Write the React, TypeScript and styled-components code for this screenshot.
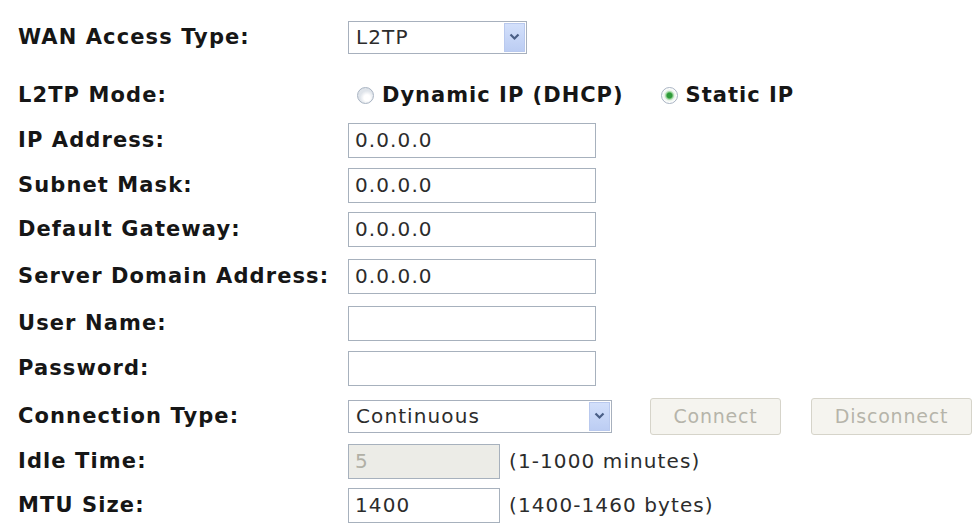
import React from 'react'
import styled, { createGlobalStyle } from 'styled-components'

const GlobalStyle = createGlobalStyle`
  body {
    margin: 0;
    background: #ffffff;
  }
`

const Chevron = () => (
  <svg width="11" height="8" viewBox="0 0 11 8">
    <path d="M1.5 1.5 L5.5 5.5 L9.5 1.5" fill="none" stroke="#4a5f86" strokeWidth="2.2" />
  </svg>
)

type SelectProps = { value: string; width: number }

const SelectBox: React.FunctionComponent<SelectProps> = ({ value, width }) => (
  <SelectFrame $w={width}>
    <SelectText>{value}</SelectText>
    <ArrowButton>
      <Chevron />
    </ArrowButton>
  </SelectFrame>
)

const Radio: React.FunctionComponent<{ checked?: boolean; label: string }> = ({ checked, label }) => (
  <RadioItem>
    <RadioDot $checked={!!checked} />
    <RadioLabel>{label}</RadioLabel>
  </RadioItem>
)

const App: React.FunctionComponent = () => {
  return (
    <Page>
      <GlobalStyle />

      <Row $mt={15}>
        <Label>WAN Access Type:</Label>
        <SelectBox value="L2TP" width={179} />
      </Row>

      <Row $mt={14}>
        <Label>L2TP Mode:</Label>
        <RadioGroup>
          <Radio label="Dynamic IP (DHCP)" />
          <Radio label="Static IP" checked />
        </RadioGroup>
      </Row>

      <Row $mt={1}>
        <Label>IP Address:</Label>
        <TextInput $w={248} defaultValue="0.0.0.0" />
      </Row>
      <Row $mt={1}>
        <Label>Subnet Mask:</Label>
        <TextInput $w={248} defaultValue="0.0.0.0" />
      </Row>
      <Row $mt={0}>
        <Label>Default Gateway:</Label>
        <TextInput $w={248} defaultValue="0.0.0.0" />
      </Row>
      <Row $mt={3}>
        <Label>Server Domain Address:</Label>
        <TextInput $w={248} defaultValue="0.0.0.0" />
      </Row>
      <Row $mt={3}>
        <Label>User Name:</Label>
        <TextInput $w={248} defaultValue="" />
      </Row>
      <Row $mt={1}>
        <Label>Password:</Label>
        <TextInput $w={248} type="password" defaultValue="" />
      </Row>

      <Row $mt={4}>
        <Label>Connection Type:</Label>
        <Controls>
          <SelectBox value="Continuous" width={264} />
          <ButtonGroup>
            <FormButton $w={131} disabled>Connect</FormButton>
            <FormButton $w={161} disabled>Disconnect</FormButton>
          </ButtonGroup>
        </Controls>
      </Row>

      <Row $mt={1}>
        <Label>Idle Time:</Label>
        <TextInput $w={152} $disabled disabled defaultValue="5" />
        <Hint>(1-1000 minutes)</Hint>
      </Row>
      <Row $mt={0}>
        <Label>MTU Size:</Label>
        <TextInput $w={152} defaultValue="1400" />
        <Hint>(1400-1460 bytes)</Hint>
      </Row>
    </Page>
  )
}

const Page = styled.div`
  display: flex;
  flex-direction: column;
  padding-left: 18px;
  width: 961px;
`

const Row = styled.div<{ $mt: number }>`
  display: flex;
  align-items: center;
  height: 44px;
  margin-top: ${p => p.$mt}px;
`

const Label = styled.div`
  width: 330px;
  flex-shrink: 0;
  font-family: "DejaVu Sans", Verdana, sans-serif;
  font-weight: bold;
  font-size: 21px;
  letter-spacing: 1.1px;
  color: #161616;
`

const SelectFrame = styled.div<{ $w: number }>`
  box-sizing: border-box;
  display: flex;
  align-items: stretch;
  width: ${p => p.$w}px;
  height: 33px;
  border: 1px solid #a7b0bd;
  background: #ffffff;
`

const SelectText = styled.div`
  flex: 1;
  display: flex;
  align-items: center;
  padding-left: 7px;
  font-family: "DejaVu Sans", Tahoma, sans-serif;
  font-size: 20px;
  letter-spacing: 1.1px;
  color: #2c2c2c;
`

const ArrowButton = styled.div`
  width: 19px;
  margin: 1px;
  display: flex;
  align-items: center;
  justify-content: center;
  background: linear-gradient(#d3e0fb, #bccdf3);
  border: 1px solid #b9c9ee;
`

const RadioGroup = styled.div`
  display: flex;
  align-items: center;
  gap: 37px;
  padding-left: 9px;
`

const RadioItem = styled.div`
  display: flex;
  align-items: center;
  gap: 8px;
`

const RadioDot = styled.span<{ $checked: boolean }>`
  box-sizing: border-box;
  width: 17px;
  height: 17px;
  border-radius: 50%;
  border: 1px solid #a8b3c2;
  background: ${p =>
    p.$checked
      ? 'radial-gradient(circle, #2f9a3a 0 2.5px, #8fd08f 3.5px, #e9f2ea 5px, #ffffff 7px)'
      : 'radial-gradient(circle at 60% 65%, #ffffff 0 3px, #dfe4ea 7px)'};
`

const RadioLabel = styled.span`
  font-family: "DejaVu Sans", Verdana, sans-serif;
  font-weight: bold;
  font-size: 21px;
  letter-spacing: 1px;
  color: #161616;
`

const TextInput = styled.input<{ $w: number; $disabled?: boolean }>`
  box-sizing: border-box;
  width: ${p => p.$w}px;
  height: 35px;
  margin: 0;
  padding: 0 6px;
  border: 1px solid #a7b1bd;
  outline: none;
  background: ${p => (p.$disabled ? '#ecece7' : '#ffffff')};
  font-family: "DejaVu Sans", Tahoma, sans-serif;
  font-size: 20px;
  letter-spacing: 1.1px;
  color: ${p => (p.$disabled ? '#b1b0a6' : '#2c2c2c')};
  &:disabled {
    color: #b1b0a6;
  }
`

const Hint = styled.span`
  margin-left: 9px;
  font-family: "DejaVu Sans", Tahoma, sans-serif;
  font-size: 20px;
  letter-spacing: 1.1px;
  color: #2c2c2c;
`

const Controls = styled.div`
  display: flex;
  align-items: center;
  gap: 38px;
`

const ButtonGroup = styled.div`
  display: flex;
  gap: 30px;
`

const FormButton = styled.button<{ $w: number }>`
  box-sizing: border-box;
  width: ${p => p.$w}px;
  height: 37px;
  padding: 0;
  border: 1px solid #d6d4ca;
  border-radius: 3px;
  background: #f5f4ef;
  font-family: "DejaVu Sans", Tahoma, sans-serif;
  font-size: 19px;
  letter-spacing: 0.8px;
  color: #b6b4aa;
`

export default App
